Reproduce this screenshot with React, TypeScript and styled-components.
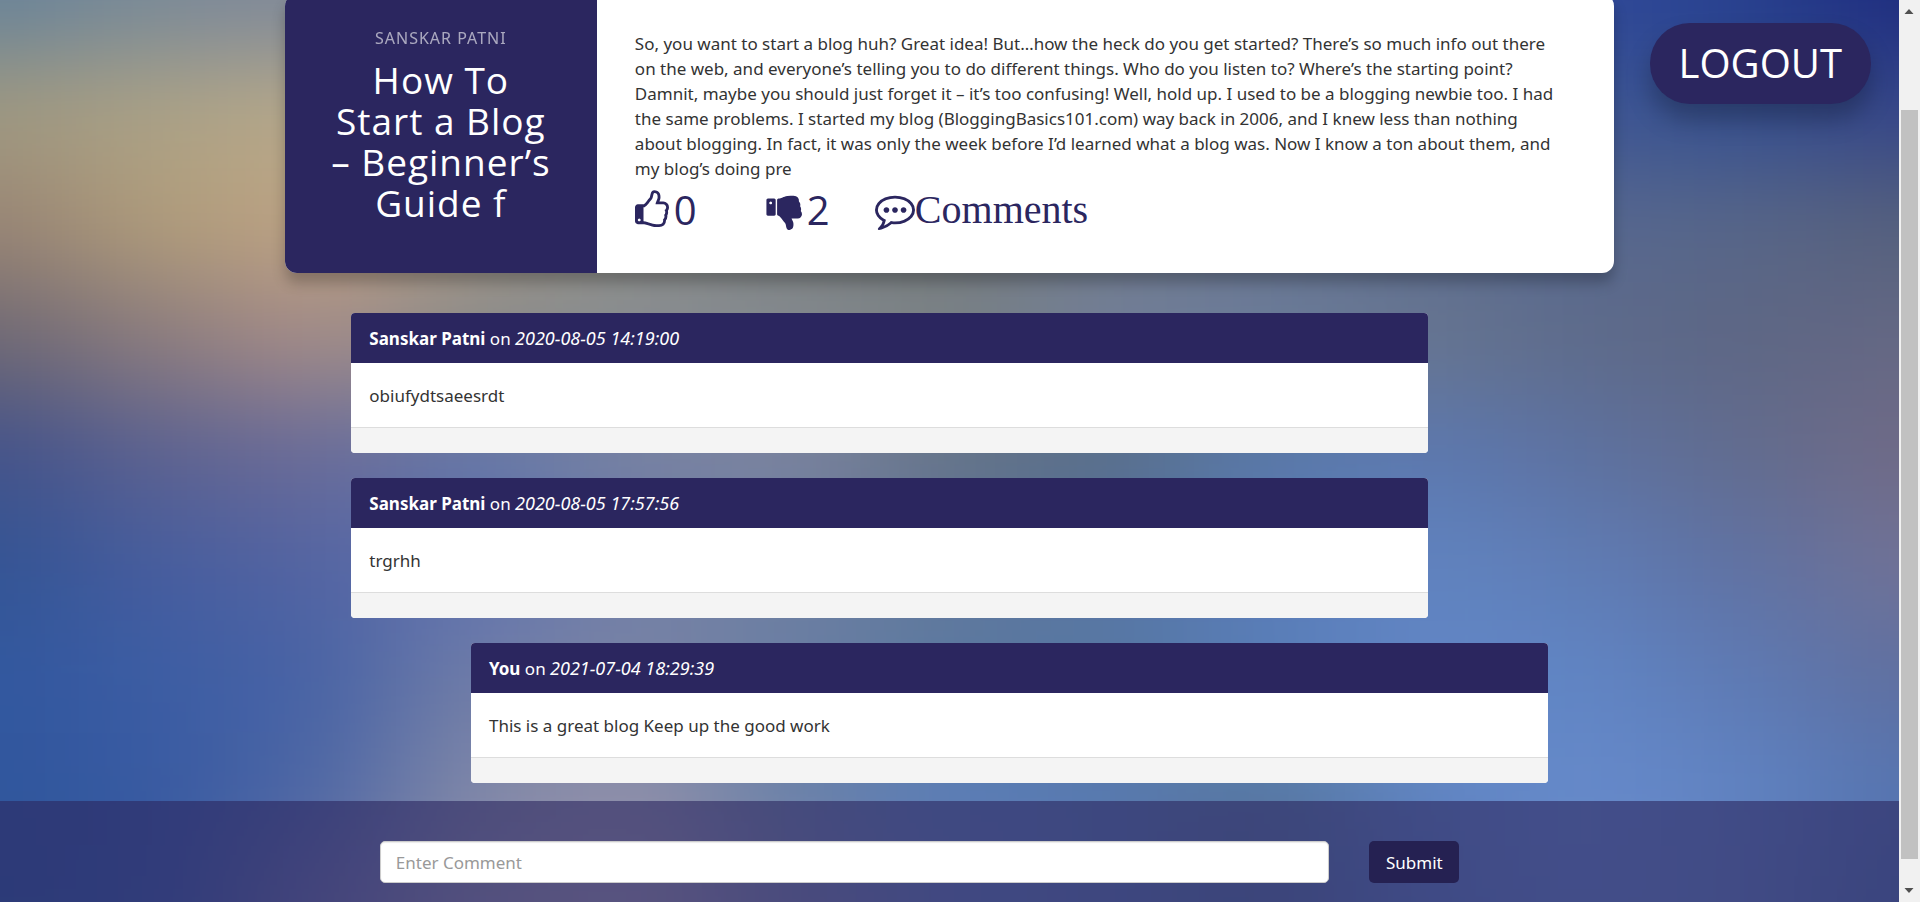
import React from "react";
import styled, { createGlobalStyle } from "styled-components";

const NAVY = "#2b265f";

const GlobalStyle = createGlobalStyle`
  * { box-sizing: border-box; }
  html, body { margin: 0; }
  body {
    font-family: "Noto Sans", "Open Sans", sans-serif;
    font-size: 17px;
    line-height: 25px;
    color: #333;
    background: #5f77a8;
  }
  button, input { font: inherit; }
`;

const Window = styled.div`
  display: grid;
  grid-template-columns: 1fr 21px;
  height: 100vh;
  overflow: hidden;
`;

const Page = styled.main`
  position: relative;
  display: flex;
  flex-direction: column;
  align-items: center;
  height: 100vh;
  overflow: hidden;
  isolation: isolate;
`;

const Backdrop = styled.svg`
  position: absolute;
  inset: 0;
  width: 100%;
  height: 100%;
  z-index: -1;
`;

const LogoutButton = styled.button`
  position: absolute;
  top: 23px;
  right: 28px;
  padding: 16px 29px 17px;
  border: 0;
  border-radius: 40px;
  background: ${NAVY};
  color: #fff;
  font-family: "Open Sans", sans-serif;
  font-size: 40px;
  line-height: 48px;
  box-shadow: 0 16px 24px rgba(0, 0, 0, 0.25);
  cursor: pointer;
`;

const Post = styled.article`
  display: flex;
  flex: none;
  width: 70%;
  min-height: 279px;
  margin: -6px 0 40px;
  border-radius: 12px;
  background: #fff;
  box-shadow: 0 10px 14px rgba(0, 0, 0, 0.24);
  overflow: hidden;
`;

const PostTitle = styled.header`
  display: flex;
  flex-direction: column;
  flex: none;
  gap: 8px;
  width: 312px;
  padding: 32px 43px;
  background: ${NAVY};
  color: #fff;
  text-align: center;
  letter-spacing: 1px;
`;

const Author = styled.h6`
  margin: 0;
  font-size: 16px;
  line-height: 25px;
  font-weight: 400;
  text-transform: uppercase;
  opacity: 0.6;
`;

const Title = styled.h2`
  margin: 0;
  font-family: "Open Sans", sans-serif;
  font-size: 37px;
  line-height: 41px;
  font-weight: 400;
`;

const PostBody = styled.div`
  flex: 1;
  padding: 37px 50px 32px 38px;
`;

const Excerpt = styled.p`
  margin: 0;
`;

const Actions = styled.div`
  display: flex;
  align-items: center;
  height: 58px;
`;

const Action = styled.button<{ $width?: number; $serif?: boolean }>`
  display: flex;
  align-items: center;
  width: ${(p) => (p.$width ? `${p.$width}px` : "auto")};
  padding: 0;
  border: 0;
  background: none;
  color: ${NAVY};
  font-family: ${(p) => (p.$serif ? '"Liberation Serif", serif' : '"Open Sans", sans-serif')};
  font-size: 40px;
  line-height: 48px;
  gap: ${(p) => (p.$serif ? "0" : "5px")};
  cursor: pointer;
`;

const Glyph = styled.svg`
  flex: none;
  height: 40px;
  fill: currentColor;
`;

const Comments = styled.section`
  display: flex;
  flex-direction: column;
  flex: none;
  gap: 25px;
  width: 63%;
  margin-bottom: 18px;
`;

const CommentCard = styled.article<{ $own?: boolean }>`
  align-self: ${(p) => (p.$own ? "flex-end" : "flex-start")};
  width: 90%;
  border-radius: 4px;
  background: #fff;
  overflow: hidden;
`;

const CommentHead = styled.header`
  padding: 13px 18px 12px;
  background: ${NAVY};
  color: #fff;

  em {
    font-size: 18px;
    line-height: 1;
  }
`;

const CommentText = styled.p`
  margin: 0;
  padding: 20px 18px 19px;
`;

const CommentFoot = styled.footer`
  height: 26px;
  border-top: 1px solid #ddd;
  background: #f4f4f4;
`;

const CommentForm = styled.form`
  display: flex;
  flex: 1 0 auto;
  align-items: flex-start;
  align-self: stretch;
  gap: 40px;
  padding: 40px 0 19px 20%;
  background: rgba(43, 38, 95, 0.6);
`;

const CommentInput = styled.input`
  width: calc(100% * 5 / 8);
  height: 42px;
  padding: 0 15px;
  border: 1px solid #ccc;
  border-radius: 5px;
  background: #fff;
  color: #333;
  box-shadow: inset 0 1px 1px rgba(0, 0, 0, 0.08);
  &::placeholder { color: #999; opacity: 1; }
`;

const SubmitButton = styled.button`
  width: 90px;
  height: 42px;
  padding: 0;
  border: 0;
  border-radius: 5px;
  background: #252152;
  color: #fff;
  cursor: pointer;
`;

const ScrollTrack = styled.div`
  display: flex;
  flex-direction: column;
  align-items: center;
  background: #f1f1f1;
`;

const ScrollThumb = styled.div`
  flex: 749 0 0;
  width: 17px;
  background: #c1c1c1;
`;

const ScrollGap = styled.div<{ $size: number }>`
  flex: ${(p) => p.$size} 0 0;
`;

const ScrollArrow = styled.svg`
  flex: none;
  width: 21px;
  height: 23px;
  fill: #505050;
`;

const ICONS = {
  up: {
    box: "128 0 1536 1792",
    width: 34,
    d: "M384 1344q0-26-19-45t-45-19-45 19-19 45 19 45 45 19 45-19 19-45zm1152-576q0-51-39-89.5t-89-38.5h-352q0-58 48-159.5t48-160.5q0-98-32-145t-128-47q-26 26-38 85t-30.5 125.5-59.5 109.5q-22 23-77 91-4 5-23 30t-31.5 41-34.5 42.5-40 44-38.5 35.5-40 27-35.5 9h-32v640h32q13 0 31.5 3t33 6.5 38 11 35 11.5 35.5 12.5 29 10.5q211 73 342 73h121q192 0 192-167 0-26-5-56 30-16 47.5-52.5t17.5-73.5-18-69q53-50 53-119 0-25-10-55.5t-25-47.5q32-1 53.5-47t21.5-81zm128-1q0 89-49 163 9 33 9 69 0 77-38 144 3 21 3 43 0 101-60 178 1 139-85 219.5t-227 80.5h-129q-96 0-189.5-22.5t-216.5-65.5q-116-40-138-40h-288q-53 0-90.5-37.5t-37.5-90.5v-640q0-53 37.5-90.5t90.5-37.5h274q36-24 137-155 58-75 107-128 24-25 35.5-85.5t30.5-126.5 62-108q39-37 90-37 84 0 151 32.5t102 101.5 35 186q0 93-48 192h176q104 0 180 76t76 179z",
  },
  down: {
    box: "0 0 1664 1792",
    width: 37,
    d: "M320 576q0 26-19 45t-45 19-45-19-19-45 19-45 45-19 45 19 19 45zm160 512v-640q0-26-19-45t-45-19h-288q-26 0-45 19t-19 45v640q0 26 19 45t45 19h288q26 0 45-19t19-45zm1129-149q55 61 55 149-1 78-57.5 135t-134.5 57h-277q4 14 8 24t11 22 10 18q18 37 27 57t19 58.5 10 76.5q0 24-.5 39t-5 45-12 50-24 45-40 40.5-60 26-82.5 10.5q-26 0-45-19-20-20-34-50t-19.5-52-12.5-61q-9-42-13.5-60.5t-17.5-48.5-31-48q-33-33-101-120-49-64-101-121t-76-59q-25-2-43-20.5t-18-43.5v-641q0-26 19-44.5t45-19.5q35-1 158-44 77-26 120.5-39.5t121.5-29 144-15.5h129q133 2 197 78 58 69 49 181 39 37 54 94 17 61 0 117 46 61 43 137 0 32-15 76z",
  },
  comment: {
    box: "0 0 1792 1792",
    width: 40,
    d: "M640 896q0 53-37.5 90.5t-90.5 37.5-90.5-37.5-37.5-90.5 37.5-90.5 90.5-37.5 90.5 37.5 37.5 90.5zm384 0q0 53-37.5 90.5t-90.5 37.5-90.5-37.5-37.5-90.5 37.5-90.5 90.5-37.5 90.5 37.5 37.5 90.5zm384 0q0 53-37.5 90.5t-90.5 37.5-90.5-37.5-37.5-90.5 37.5-90.5 90.5-37.5 90.5 37.5 37.5 90.5zm-512-512q-204 0-381.5 69.5t-282 187.5-104.5 255q0 112 71.5 213.5t201.5 175.5l87 50-27 96q-24 91-70 172 152-63 275-171l43-38 57 6q69 8 130 8 204 0 381.5-69.5t282-187.5 104.5-255-104.5-255-282-187.5-381.5-69.5zm896 512q0 174-120 321.5t-326 233-450 85.5q-70 0-145-8-198 175-460 242-49 14-114 22h-5q-15 0-27-10.5t-16-27.5v-1q-3-4-.5-12t2-10 4.5-9.5l6-9 7-8.5 8-9q7-8 31-34.5t34.5-38 31-39.5 32.5-51 27-59 26-76q-157-89-247.5-220t-90.5-281q0-174 120-321.5t326-233 450-85.5 450 85.5 326 233 120 321.5z",
  },
};

function Icon({ name }: { name: keyof typeof ICONS }) {
  const icon = ICONS[name];
  return (
    <Glyph viewBox={icon.box} width={icon.width} aria-hidden="true">
      <path d={icon.d} />
    </Glyph>
  );
}

/* Colour mesh of the out-of-focus backdrop, one row per band of the page. */
const MESH = [
  "688399 7a8a98 80889a 808890 80888c 788088 6c788c 60708f 506494 3a509a 2f4898 27408f 1e2c7e",
  "a09980 aca286 b8aa8a a09888 8c8a80 808488 78808c 687894 586c94 4a6094 3e5693 36508f 364688",
  "988474 b09c7a bea284 a09488 8c8c88 7c8080 74787c 70788a 687490 5e6e90 566890 586688 55607c",
  "6e6874 8c7c7e a68c88 8b8c88 888d92 848a90 7a8284 72809a 6b7c99 67758f 5e6b8a 5d6684 656884",
  "43528a 5d6290 6c6c98 6275a8 7580a3 7b83a0 637287 566c86 5778a8 5c78b0 5d71a0 626c8e 706a86",
  "335494 475d9e 5464a2 6073b0 7380a8 6d7f9f 62779b 5875a5 5b7cb8 6184c0 5f7cb5 5f71a2 717296",
  "32589f 3c5da4 4863a5 6f7ca8 7a83a3 6a7ea5 5a799f 5676a0 577db8 6286c6 6085c4 5e7ab4 5f6f9f",
  "30559c 385aa2 4e67a5 8088a8 908fa9 6a82a8 5a7eb8 587ab0 58789f 6085c2 678acb 6083c2 5674b0",
  "2e5a9e 385ba2 6a72a5 9090ac a09ab0 7880a8 607cb5 5a78b0 5270a0 5c7fbe 668ac8 6283bd 4f70aa",
].map((row) => row.split(" "));

const CELL_W = 160;
const CELL_H = 113;

function MeshBackdrop() {
  const rows = MESH.length;
  const cols = MESH[0].length;
  const clamp = (n: number, max: number) => Math.min(Math.max(n, 0), max);
  const cells: React.ReactNode[] = [];
  for (let r = -1; r <= rows; r++) {
    for (let c = -1; c <= cols; c++) {
      cells.push(
        <rect
          key={`${r}:${c}`}
          x={(c - 0.5) * CELL_W}
          y={(r - 0.5) * CELL_H}
          width={CELL_W + 1}
          height={CELL_H + 1}
          fill={`#${MESH[clamp(r, rows - 1)][clamp(c, cols - 1)]}`}
        />
      );
    }
  }
  return (
    <Backdrop
      viewBox={`0 0 ${CELL_W * (cols - 1)} ${CELL_H * (rows - 1)}`}
      preserveAspectRatio="none"
      aria-hidden="true"
    >
      <defs>
        <filter id="soften" x="-10%" y="-10%" width="120%" height="120%" colorInterpolationFilters="sRGB">
          <feGaussianBlur stdDeviation="66 46" />
        </filter>
      </defs>
      <g filter="url(#soften)">{cells}</g>
    </Backdrop>
  );
}

const COMMENTS = [
  { author: "Sanskar Patni", date: "2020-08-05 14:19:00", text: "obiufydtsaeesrdt", own: false },
  { author: "Sanskar Patni", date: "2020-08-05 17:57:56", text: "trgrhh", own: false },
  { author: "You", date: "2021-07-04 18:29:39", text: "This is a great blog Keep up the good work", own: true },
];

export default function App() {
  return (
    <Window>
      <GlobalStyle />
      <Page>
        <MeshBackdrop />
        <Post>
          <PostTitle>
            <Author>Sanskar Patni</Author>
            <Title>How To Start a Blog – Beginner’s Guide f</Title>
          </PostTitle>
          <PostBody>
            <Excerpt>
              So, you want to start a blog huh? Great idea! But…how the heck do you get started? There’s so much
              info out there on the web, and everyone’s telling you to do different things. Who do you listen to?
              Where’s the starting point? Damnit, maybe you should just forget it – it’s too confusing! Well, hold
              up. I used to be a blogging newbie too. I had the same problems. I started my blog
              (BloggingBasics101.com) way back in 2006, and I knew less than nothing about blogging. In fact, it was
              only the week before I’d learned what a blog was. Now I know a ton about them, and my blog’s doing pre
            </Excerpt>
            <Actions>
              <Action type="button" $width={130} aria-label="Like, 0">
                <Icon name="up" />0
              </Action>
              <Action type="button" $width={110} aria-label="Dislike, 2">
                <Icon name="down" />2
              </Action>
              <Action type="button" $serif>
                <Icon name="comment" />
                Comments
              </Action>
            </Actions>
          </PostBody>
        </Post>
        <Comments aria-label="Comments">
          {COMMENTS.map((c) => (
            <CommentCard key={c.date} $own={c.own}>
              <CommentHead>
                <strong>{c.author}</strong> on <em>{c.date}</em>
              </CommentHead>
              <CommentText>{c.text}</CommentText>
              <CommentFoot />
            </CommentCard>
          ))}
        </Comments>
        <CommentForm onSubmit={(e) => e.preventDefault()}>
          <CommentInput type="text" placeholder="Enter Comment" aria-label="Enter Comment" />
          <SubmitButton type="submit">Submit</SubmitButton>
        </CommentForm>
        <LogoutButton type="button">LOGOUT</LogoutButton>
      </Page>
      <ScrollTrack aria-hidden="true">
        <ScrollArrow viewBox="0 0 21 23">
          <path d="M5.500 14L10 9L14.500 14z" />
        </ScrollArrow>
        <ScrollGap $size={87} />
        <ScrollThumb />
        <ScrollGap $size={20} />
        <ScrollArrow viewBox="0 0 21 23">
          <path d="M5.500 9L10 14L14.500 9z" />
        </ScrollArrow>
      </ScrollTrack>
    </Window>
  );
}
